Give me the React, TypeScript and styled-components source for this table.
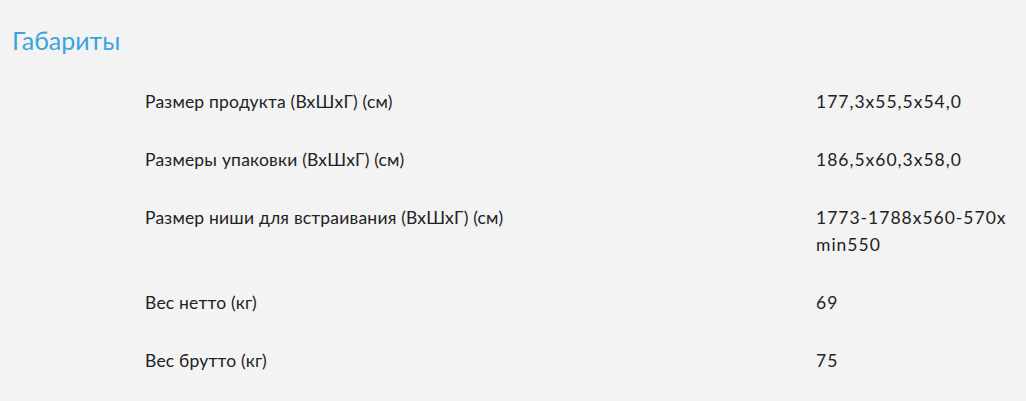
import { Fragment } from "react";
import styled, { createGlobalStyle } from "styled-components";

const GlobalStyle = createGlobalStyle`
  html, body {
    margin: 0;
    padding: 0;
    background: #f3f3f3;
  }
`;

const Section = styled.section`
  padding: 24px 12px 0 12px;
  font-family: Lato, "Open Sans", sans-serif;
  color: #222;
`;

const Title = styled.h2`
  margin: 0 0 32px 0;
  font-size: 25px;
  font-weight: 400;
  line-height: 32px;
  color: #3ba4e0;
`;

const SpecTable = styled.div`
  display: grid;
  grid-template-columns: 671px 210px;
  padding-left: 133px;
`;

const Cell = styled.div<{ $value?: boolean }>`
  font-size: 17.5px;
  line-height: 27px;
  padding-bottom: 31px;
  letter-spacing: ${(p) => (p.$value ? "1px" : "0.2px")};
`;

const rows: [string, string][] = [
  ["Размер продукта (ВхШхГ) (см)", "177,3x55,5x54,0"],
  ["Размеры упаковки (ВхШхГ) (см)", "186,5x60,3x58,0"],
  ["Размер ниши для встраивания (ВхШхГ) (см)", "1773-1788x560-570x min550"],
  ["Вес нетто (кг)", "69"],
  ["Вес брутто (кг)", "75"],
];

const App = () => {
  return (
    <>
      <GlobalStyle />
      <Section>
        <Title>Габариты</Title>
        <SpecTable>
          {rows.map(([label, value]) => (
            <Fragment key={label}>
              <Cell>{label}</Cell>
              <Cell $value>{value}</Cell>
            </Fragment>
          ))}
        </SpecTable>
      </Section>
    </>
  );
};

export default App;
